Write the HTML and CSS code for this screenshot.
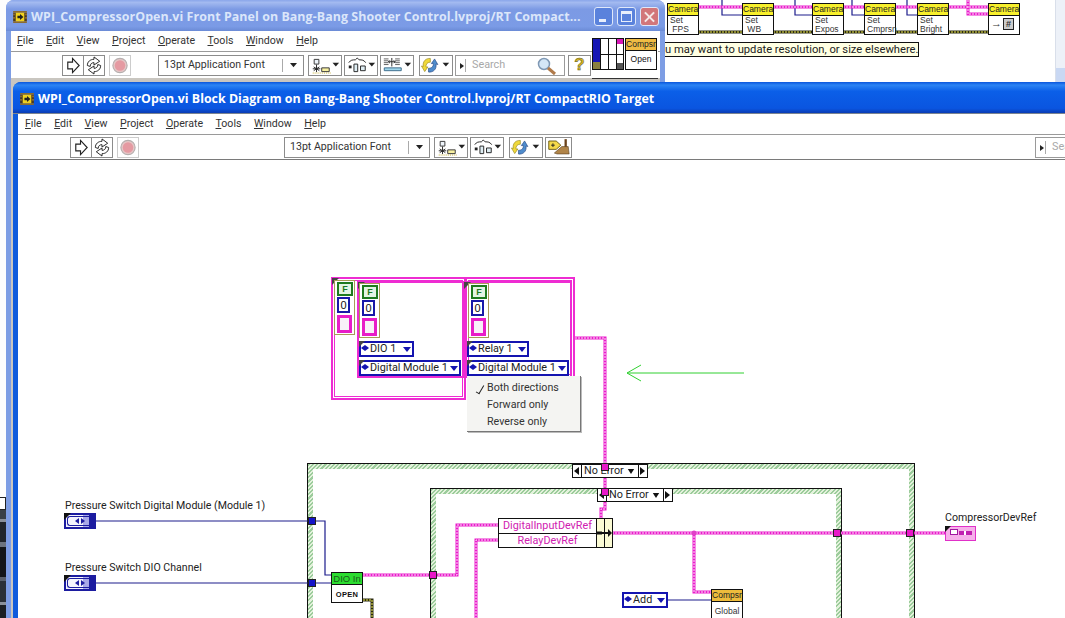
FILE: index.html
```html
<!DOCTYPE html>
<html lang="en">
<head>
<meta charset="utf-8">
<title>WPI_CompressorOpen.vi Block Diagram</title>
<link rel="stylesheet" href="styles.css">
</head>
<body>
<svg class="defs" width="0" height="0" aria-hidden="true">
  <defs>
    <symbol id="i-vi" viewBox="0 0 16 14"><path d="M0 2h16v10H0z" fill="#4a3a20"/><path d="M0 0h16v2H0zM0 12h16v2H0z" fill="#8a6a30"/><path d="M3 2h10v10H3z" fill="#f0d020"/><path d="M5 5.500h3V3.500l4 3.500-4 3.500V8.500H5z" fill="#222"/><path d="M1 3v2M1 7v2M15 3v2M15 7v2" stroke="#e0a040"/></symbol>
    <symbol id="i-run" viewBox="0 0 21 20"><path d="M5 6.500h5V2.500l7 7.500-7 7.500V13.500H5z" fill="#fff" stroke="#222" stroke-width="1.200"/></symbol>
    <symbol id="i-loop" viewBox="0 0 21 20"><path d="M3.500 10c0-4 3-6.500 7-6.500V1l6 4.500-6 4V7C8 7 6.500 8.500 6.500 11z" fill="#fff" stroke="#222"/><path d="M17.500 10c0 4-3 6.500-7 6.500V19l-6-4.500 6-4V13c2.500 0 4-1.500 4-4z" fill="#fff" stroke="#222"/></symbol>
    <symbol id="i-stop" viewBox="0 0 21 20"><circle cx="10.500" cy="10" r="7.500" fill="#e6c6c6" stroke="#b5aeae" stroke-width="1.200"/><circle cx="10.500" cy="10" r="5.500" fill="#e59aa2"/></symbol>
    <symbol id="i-align" viewBox="0 0 34 20"><path d="M5.500 3.500h5v5h-5z" fill="#eef4fa" stroke="#333"/><path d="M8 9v8M4 13.500h8M5 11.500l6 4M11 11.500l-6 4" stroke="#222" stroke-width="1"/><path d="M13.500 12.500h8v4h-8z" fill="#f8f0a0" stroke="#333"/><path d="M4 18h19" stroke="#c0a820" stroke-dasharray="1 1"/><path d="M25 7h7l-3.500 4z" fill="#222"/></symbol>
    <symbol id="i-dist" viewBox="0 0 34 20"><path d="M4 7c2-3 4-3 7-3l2-2 2 2c3 0 5 0 7 3" fill="none" stroke="#222"/><path d="M4 10h3v3H4z" fill="#222"/><path d="M9.500 8.500h4v8h-4zM16.500 10.500h5v5h-5z" fill="#dfeef4" stroke="#222"/><path d="M25 7h7l-3.500 4z" fill="#222"/></symbol>
    <symbol id="i-resize" viewBox="0 0 34 20"><path d="M3 3h5M3 5h5M3 7h5M3 9h5M15 3h5M15 5h5M15 7h5M15 9h5" stroke="#333" stroke-width=".8"/><path d="M11.500 2v9" stroke="#222"/><path d="M8 6h7M9.500 4.500L8 6l1.500 1.500M13.500 4.500L15 6l-1.500 1.500" fill="none" stroke="#222"/><path d="M3.500 12.500h18v3h-18z" fill="#9fd6ea" stroke="#3a6a8a"/><path d="M25 7h7l-3.500 4z" fill="#222"/></symbol>
    <symbol id="i-order" viewBox="0 0 34 20"><path d="M11 2.500C6 2 2.500 6 3.500 11l-2-.5 3.500 6 3.500-5-2 .2C6 9 7.500 6.500 11 6.500z" fill="#efd83a" stroke="#8a7a10" stroke-width=".6"/><path d="M9 17c5 .5 9-3 8-8.500l2 .5-3.500-6-3.500 5 2-.2c.5 2.700-1 5-5 5.200z" fill="#4f8ccc" stroke="#1a3a78" stroke-width=".6"/><path d="M24 7h7l-3.500 4z" fill="#222"/></symbol>
    <symbol id="i-clean" viewBox="0 0 27 20"><path d="M3 3h8l5 4.500-5 4.500H3z" fill="#f5d94a" stroke="#6a5a10"/><path d="M5.500 7.500h4M7.500 5.500v4" stroke="#222"/><path d="M20 1h2.500v9H20z" fill="#6a421a"/><path d="M9 16l8-7h7l1 8H12z" fill="#b08448" stroke="#50361a" stroke-width=".6"/></symbol>
    <symbol id="i-caret" viewBox="0 0 10 8"><path d="M1 1h8L5 6z" fill="#222"/></symbol>
  </defs>
</svg>

<main class="desktop">
  <div class="strip-white"></div>
  <div class="strip-photo"></div>

  <section class="win win-back">
    <div class="back-stage">
      <svg class="wires" width="1065" height="82" aria-hidden="true">
        <path class="w-blue" d="M722 0V15H742M795 0V15H812M852 0V15H864M907 0V15H917"/>
        <path class="w-err" d="M698 32H742M773 32H812M843 32H864M895 32H917M948 32H988"/>
        <path class="w-err-core" d="M698 32H742M773 32H812M843 32H864M895 32H917M948 32H988"/>
        <path class="w-pink" d="M698 7H742M773 7H812M843 7H864M895 7H917M948 7H988M968 0V14H988"/>
        <path class="w-core" d="M698 7H742M773 7H812M843 7H864M895 7H917M948 7H988M968 0V14H988"/>
      </svg>
      <div class="cam c1"><b>Camera</b><span>Set<br>&nbsp;FPS</span></div>
      <div class="cam c2"><b>Camera</b><span>Set<br>&nbsp;WB</span></div>
      <div class="cam c3"><b>Camera</b><span>Set<br>Expos</span></div>
      <div class="cam c4"><b>Camera</b><span>Set<br>Cmprsn</span></div>
      <div class="cam c5"><b>Camera</b><span>Set<br>Bright</span></div>
      <div class="cam c6"><b>Camera</b><span class="cam-file">→<i>#</i></span></div>
      <div class="tip">u may want to update resolution, or size elsewhere.</div>
    </div>
    <div class="back-scroll"><div class="back-thumb"></div></div>
  </section>

  <section class="win win-front">
    <header class="title title-off">
      <svg class="vi-icon"><use href="#i-vi"/></svg>
      <h2>WPI_CompressorOpen.vi Front Panel on Bang-Bang Shooter Control.lvproj/RT Compact...</h2>
      <div class="caps">
        <span class="cap cap-min"></span>
        <span class="cap cap-max"></span>
        <span class="cap cap-close"></span>
      </div>
    </header>
    <nav class="menu">
      <span><u>F</u>ile</span><span><u>E</u>dit</span><span><u>V</u>iew</span><span><u>P</u>roject</span><span><u>O</u>perate</span><span><u>T</u>ools</span><span><u>W</u>indow</span><span><u>H</u>elp</span>
    </nav>
    <div class="tools tools-front">
      <span class="tb tb-s"><svg><use href="#i-run"/></svg></span>
      <span class="tb tb-s"><svg><use href="#i-loop"/></svg></span>
      <span class="tb tb-s tb-stop"><svg><use href="#i-stop"/></svg></span>
      <span class="font-sel">13pt Application Font<em></em><svg><use href="#i-caret"/></svg></span>
      <span class="tb tb-m"><svg><use href="#i-align"/></svg></span>
      <span class="tb tb-m"><svg><use href="#i-dist"/></svg></span>
      <span class="tb tb-m"><svg><use href="#i-resize"/></svg></span>
      <span class="tb tb-m tb-far"><svg><use href="#i-order"/></svg></span>
      <span class="search"><i></i>Search
        <svg class="lens" viewBox="0 0 22 20"><circle cx="8" cy="8" r="5.500" fill="#d4e6f6" stroke="#7f98b4" stroke-width="1.500"/><path d="M12 12l7 6" stroke="#b07a4a" stroke-width="3"/></svg>
      </span>
      <span class="tb tb-help">?</span>
    </div>
    <div class="front-rest"></div>
    <div class="pane">
      <div class="conn">
        <span class="p1"></span><span class="p2"></span><span class="p3"></span>
      </div>
      <div class="vi-node"><b>Compsr</b><span>Open</span></div>
    </div>
  </section>

  <section class="win win-block">
    <header class="title title-on">
      <svg class="vi-icon"><use href="#i-vi"/></svg>
      <h2>WPI_CompressorOpen.vi Block Diagram on Bang-Bang Shooter Control.lvproj/RT CompactRIO Target</h2>
    </header>
    <nav class="menu">
      <span><u>F</u>ile</span><span><u>E</u>dit</span><span><u>V</u>iew</span><span><u>P</u>roject</span><span><u>O</u>perate</span><span><u>T</u>ools</span><span><u>W</u>indow</span><span><u>H</u>elp</span>
    </nav>
    <div class="tools tools-block">
      <span class="tb tb-s"><svg><use href="#i-run"/></svg></span>
      <span class="tb tb-s"><svg><use href="#i-loop"/></svg></span>
      <span class="tb tb-s tb-stop"><svg><use href="#i-stop"/></svg></span>
      <span class="font-sel font-sel-b">13pt Application Font<em></em><svg><use href="#i-caret"/></svg></span>
      <span class="tb tb-m"><svg><use href="#i-align"/></svg></span>
      <span class="tb tb-m"><svg><use href="#i-dist"/></svg></span>
      <span class="tb tb-m tb-far"><svg><use href="#i-order"/></svg></span>
      <span class="tb tb-c"><svg><use href="#i-clean"/></svg></span>
      <span class="search search-b"><i></i>Search</span>
    </div>

    <div class="canvas">
      <div class="stage">
        <div class="case case-outer"></div>
        <div class="case case-inner"></div>

        <div class="seq seq-a"></div>
        <div class="seq seq-b"></div>
        <div class="seq-in seq-c"></div>
        <div class="seq-in seq-d"></div>

        <svg class="wires" width="1065" height="618" aria-hidden="true">
          <path class="w-blue" d="M95 521H312H325V575H331M95 583H331M668 600H711"/>
          <path class="w-err" d="M363 600H372V618"/>
          <path class="w-err-core" d="M363 600H372V618"/>
          <path class="w-pink" d="M575 338H605V509H601V518M363 575H457V525H498M498 540H476V618M612 533H945M694 533V592H711"/>
          <path class="w-core" d="M575 338H605V509H601V518M363 575H457V525H498M498 540H476V618M612 533H945M694 533V592H711"/>
          <circle class="w-dot" cx="694" cy="533" r="2.500"/>
          <path class="w-arrow" d="M744 373H627M641 365L627 373L641 381"/>
        </svg>

        <div class="order o1"><b>F</b><i>0</i><span></span></div>
        <div class="order o2"><b>F</b><i>0</i><span></span></div>
        <div class="order o3"><b>F</b><i>0</i><span></span></div>

        <div class="ring r1"><s></s>DIO 1<svg viewBox="0 0 10 8"><path d="M0 1h10L5 7z"/></svg></div>
        <div class="ring r2"><s></s>Digital Module 1<svg viewBox="0 0 10 8"><path d="M0 1h10L5 7z"/></svg></div>
        <div class="ring r3"><s></s>Relay 1<svg viewBox="0 0 10 8"><path d="M0 1h10L5 7z"/></svg></div>
        <div class="ring r4"><s></s>Digital Module 1<svg viewBox="0 0 10 8"><path d="M0 1h10L5 7z"/></svg></div>
        <div class="ring r5"><s></s>Add<svg viewBox="0 0 10 8"><path d="M0 1h10L5 7z"/></svg></div>

        <ul class="popup">
          <li class="on">Both directions</li>
          <li>Forward only</li>
          <li>Reverse only</li>
        </ul>

        <div class="sel sel-outer"><u></u><span>No Error</span><svg viewBox="0 0 10 8"><path d="M1 1h8L5 7z"/></svg><u class="nx"></u></div>
        <div class="sel sel-inner"><u></u><span>No Error</span><svg viewBox="0 0 10 8"><path d="M1 1h8L5 7z"/></svg><u class="nx"></u></div>

        <span class="term t-b1"></span><span class="term t-b2"></span>
        <span class="term t-p1"></span><span class="term t-p2"></span>
        <span class="term t-p3"></span><span class="term t-p4"></span><span class="term t-p5"></span>

        <div class="label l1">Pressure Switch Digital Module (Module 1)</div>
        <div class="label l2">Pressure Switch DIO Channel</div>
        <div class="label l3">CompressorDevRef</div>

        <div class="ctrl ct1"><s></s><i></i></div>
        <div class="ctrl ct2"><s></s><i></i></div>

        <div class="dio"><b>DIO In</b><span>OPEN</span></div>

        <div class="bundle">
          <div class="bn-names"><span>DigitalInputDevRef</span><span>RelayDevRef</span></div>
          <div class="bn-a"></div><div class="bn-b"></div>
          <svg viewBox="0 0 15 8"><path d="M0 2.500h5v3H0z"/><path d="M5 3h6V0l4 4-4 4V5H5z"/></svg>
        </div>

        <div class="indicator"><s></s><i></i><em></em></div>

        <div class="global"><b>Compsr</b><span>Global</span></div>
      </div>
    </div>
  </section>
</main>
</body>
</html>
```
FILE: styles.css
```css
html, body { margin: 0; padding: 0; width: 1065px; height: 618px; overflow: hidden; background: #fff; }
body { font-family: Roboto, "Liberation Sans", sans-serif; font-size: 11px; color: #111; }
.defs { position: absolute; }
.desktop { position: relative; width: 1065px; height: 618px; overflow: hidden; background: #fdfdfd; }
.strip-white { position: absolute; left: 0; top: 497px; width: 6px; height: 13px; border: 1px solid #222; border-left: 0; box-sizing: border-box; background: #fff; }
.strip-photo { position: absolute; left: 0; top: 510px; width: 6px; height: 108px; background: linear-gradient(180deg, #3a4048 0 8%, #8a909b 8% 11%, #22262c 11% 30%, #6d7480 30% 34%, #14161a 34% 62%, #5a606c 62% 66%, #2b3038 66% 85%, #8a909b 85% 88%, #1c1f24 88%); }

/* windows */
.win { position: absolute; box-sizing: border-box; }
.win-back { left: 640px; top: 0; width: 425px; height: 82px; background: #fff; overflow: hidden; }
.back-stage { position: absolute; left: -640px; top: 0; width: 1065px; height: 82px; }
.back-scroll { position: absolute; right: 0; top: 0; width: 9px; height: 82px; background: #edf1f8; border-left: 1px solid #d9dfea; }
.back-thumb { position: absolute; left: 0; right: 0; top: 68px; height: 14px; background: #c9d8f3; }

.win-front { left: 6px; top: 0; width: 659px; height: 618px; display: flex; flex-direction: column; padding: 0 5px; background: #7d9de4; border-radius: 8px 8px 0 0; }
.win-block { left: 13px; top: 82px; width: 1100px; height: 536px; display: flex; flex-direction: column; padding: 0 5px; background: #0f5bdc; border-radius: 8px 0 0 0; }

.title { display: flex; align-items: center; flex: none; margin: 0 -5px; padding-left: 7px; gap: 4px; box-sizing: border-box; }
.title h2 { margin: 0; font: 700 12.400px/1 "Open Sans", "Liberation Sans", sans-serif; white-space: nowrap; }
.title-off { height: 31px; padding-top: 3px; border-radius: 8px 8px 0 0; background: linear-gradient(180deg, #8aa6ea 0, #a3baf0 8%, #7c9ae4 30%, #7b9be6 85%, #6b8bd6 100%); }
.title-off h2 { color: #dbe6fa; letter-spacing: .08px; }
.title-on { height: 32px; padding-top: 3px; border-radius: 8px 0 0 0; background: linear-gradient(180deg, #0a56dc 0, #2c84f4 10%, #0b5fe8 30%, #0a55e0 85%, #0a3cb4 100%); border-bottom: 1px solid #7b8490; }
.title-on h2 { color: #fff; }
.vi-icon { width: 14px; height: 12px; flex: none; }

.caps { display: flex; gap: 4px; position: absolute; left: 588px; top: 7px; }
.cap { width: 19px; height: 19px; box-sizing: border-box; border: 1px solid #dfe8fa; border-radius: 3px; background: #5a82dc; position: relative; }
.cap-min::after { content: ""; position: absolute; left: 4px; bottom: 3px; width: 7px; height: 3px; background: #e8eefb; }
.cap-max::after { content: ""; position: absolute; left: 3px; top: 3px; width: 11px; height: 11px; box-sizing: border-box; border: 1px solid #e8eefb; border-top-width: 3px; }
.cap-close { background: #d2767a; }
.cap-close::before, .cap-close::after { content: ""; position: absolute; left: 2px; top: 7.500px; width: 13px; height: 2px; background: #f4e8e8; transform: rotate(45deg); }
.cap-close::after { transform: rotate(-45deg); }

.menu { display: flex; flex: none; height: 20px; align-items: center; padding-left: 6px; gap: 12.500px; background: #fff; border-bottom: 1px solid #9a9a9a; box-sizing: content-box; font: 10.600px/1 Roboto, "Liberation Sans", sans-serif; color: #333; }
.menu u { text-decoration-thickness: 1px; text-underline-offset: 1px; }
.win-block .menu { padding-left: 7px; }

.tools { display: flex; flex: none; align-items: center; height: 26px; box-sizing: border-box; background: #fff; }
.tools-front { padding-left: 51px; }
.tools-block { padding-left: 52px; height: 25px; border-bottom: 1px solid #7a7a7a; }
.tb { display: block; box-sizing: border-box; height: 21px; border: 1px solid #8c8c8c; flex: none; background: #fff; }
.tb svg { display: block; width: 100%; height: 100%; }
.tb-s { width: 22px; margin-right: -1px; }
.tb-stop { margin-left: 5px; margin-right: 27px; border-color: #ccc; }
.tools-block .tb-stop { margin-right: 145px; }
.tb-m { width: 34px; margin-right: 2px; }
.tb-far { margin-left: 3px; margin-right: 2px; }
.tb-c { width: 27px; }
.tb-help { width: 23px; margin-left: 3px; font: 700 17px/18px "Liberation Sans", sans-serif; text-align: center; color: #d8b420; -webkit-text-stroke: .5px #5a5a20; }
.font-sel { display: flex; align-items: center; box-sizing: border-box; width: 146px; height: 21px; flex: none; margin-right: 4px; padding-left: 5px; border: 1px solid #8c8c8c; font: 10.600px/1 Roboto, "Liberation Sans", sans-serif; color: #333; }
.font-sel em { width: 1px; height: 13px; background: #aaa; margin-left: auto; margin-right: 6px; }
.font-sel svg { width: 9px; height: 7px; margin-right: 5px; }
.search { display: flex; align-items: center; position: relative; box-sizing: border-box; width: 110px; height: 21px; flex: none; padding-left: 16px; border: 1px solid #9a9a9a; font: 10.800px/1 Roboto, "Liberation Sans", sans-serif; color: #a8a8a8; }
.search i { position: absolute; left: 4px; top: 7px; border-left: 4px solid #222; border-top: 3px solid transparent; border-bottom: 3px solid transparent; }
.search i::after { content: ""; position: absolute; left: 1px; top: -7px; width: 1px; height: 13px; background: #aaa; }
.lens { position: absolute; right: 6px; top: 0; width: 22px; height: 20px; }
.search-b { margin-left: 463px; }

.front-rest { flex: 1; background: #c9c6c0; }
.pane { position: absolute; left: 586px; top: 38px; width: 66px; height: 40px; display: flex; align-items: flex-start; border-bottom: 1px solid #333; background: #fff; }
.conn { width: 32px; height: 32px; box-sizing: border-box; margin-right: 1px; position: relative; border: 1px solid #111; background: #fff; background-image: linear-gradient(#111, #111), linear-gradient(#111, #111), linear-gradient(#111, #111), linear-gradient(#111, #111); background-size: 1px 100%, 1px 100%, 1px 100%, 100% 1px; background-position: 7px 0, 15px 0, 23px 0, 0 15px; background-repeat: no-repeat; }
.conn .p1 { position: absolute; left: 0; top: 0; width: 7px; height: 30px; background: linear-gradient(180deg, #1616b4 0 77%, #8a8040 77%); }
.conn .p2 { position: absolute; left: 24px; top: 0; width: 6px; height: 5px; background: #d818b8; }
.conn .p3 { position: absolute; left: 24px; top: 24px; width: 6px; height: 6px; background: #555; }
.vi-node { width: 32px; height: 32px; box-sizing: border-box; border: 1px solid #111; text-align: center; font: 8.500px/1 "Liberation Sans", sans-serif; background: #fff; }
.vi-node b { display: block; font-weight: 400; height: 11px; line-height: 11px; background: #f0bc44; border-bottom: 1px solid #111; color: #222; }
.vi-node span { display: block; padding-top: 4px; }

/* canvas */
.canvas { position: relative; flex: 1; background: #fff; overflow: hidden; }
.stage { position: absolute; left: -18px; top: -160px; width: 1065px; height: 618px; }
.wires { position: absolute; left: 0; top: 0; fill: none; }
.w-blue { stroke: #1c1c8c; stroke-width: 1.200; }
.w-pink { stroke: #ea1ccc; stroke-width: 3; }
.w-core { stroke: #fbe0f6; stroke-width: 1; stroke-dasharray: 2 1; }
.w-err { stroke: #2a2a10; stroke-width: 3; }
.w-err-core { stroke: #f0ec50; stroke-width: 1; stroke-dasharray: 2 1; }
.w-dot { fill: #e040c8; }
.w-arrow { stroke: #30d030; stroke-width: 1; }

/* background window nodes */
.cam { position: absolute; top: 3px; width: 32px; height: 32px; box-sizing: border-box; border: 1px solid #111; background: #fff; font: 8.500px/1 "Liberation Sans", sans-serif; }
.cam b { display: block; height: 11px; line-height: 11px; font-weight: 400; text-align: center; background: #f8f02c; border-bottom: 1px solid #111; color: #222; }
.cam span { display: block; padding: 0 0 0 2px; line-height: 9px; color: #333; white-space: nowrap; }
.cam-file { font-size: 11px; padding-top: 2px !important; }
.cam-file i { display: inline-block; width: 11px; height: 12px; margin-left: 1px; background: #ccc; border: 1px solid #222; box-sizing: border-box; font: 700 9px/11px "Liberation Sans", sans-serif; text-align: center; }
.c1 { left: 667px; } .c2 { left: 742px; } .c3 { left: 812px; } .c4 { left: 864px; } .c5 { left: 917px; } .c6 { left: 988px; }
.tip { position: absolute; left: 665px; top: 42px; width: 254px; height: 15px; box-sizing: border-box; border: 1px solid #111; border-left: 0; background: #ffffe2; font: 11.200px/14px Roboto, "Liberation Sans", sans-serif; color: #222; white-space: nowrap; overflow: hidden; }

/* structures */
.case { position: absolute; box-sizing: border-box; border: 1px solid #111; border-bottom: 0; background: repeating-linear-gradient(135deg, #9ccc9c 0 1.500px, #e4f2dc 1.500px 3px); }
.case::after { content: ""; position: absolute; left: 5px; right: 5px; top: 5px; bottom: 0; background: #fff; }
.case-outer { left: 307px; top: 463px; width: 608px; height: 155px; }
.case-inner { left: 430px; top: 488px; width: 412px; height: 130px; }

.seq { position: absolute; box-sizing: border-box; border: 2px solid #ee2cd2; box-shadow: inset 0 0 0 1px #fff, inset 0 0 0 2px #ee2cd2; }
.seq-a { left: 331px; top: 277px; width: 135px; height: 123px; }
.seq-b { left: 465px; top: 277px; width: 110px; height: 101px; }
.seq-in { position: absolute; box-sizing: border-box; border: 2px solid #ee2cd2; }
.seq-c { left: 357px; top: 281px; width: 107px; height: 97px; }
.seq-d { left: 465px; top: 281px; width: 107px; height: 97px; border-left: 0; }
.seq-a::before, .seq-c::before, .seq-d::before { content: ""; position: absolute; left: -1px; top: -1px; width: 0; height: 0; border-top: 7px solid #444; border-right: 7px solid transparent; }

.order { position: absolute; box-sizing: border-box; width: 21px; height: 55px; border: 1px solid #a89a58; background: #fff; padding: 1px 2px; }
.order b, .order i, .order span { display: block; box-sizing: border-box; }
.order b { width: 16px; height: 14px; border: 2px solid #1e7a1e; background: #e4f4e4; font: 700 9px/10px "Liberation Sans", sans-serif; text-align: center; color: #1e7a1e; }
.order i { width: 13px; height: 16px; margin-top: 1px; border: 2px solid #1818a8; font: 400 11px/12px "Liberation Sans", sans-serif; text-align: center; }
.order span { width: 15px; height: 18px; margin-top: 2px; border: 3px solid #e81cc8; background: #f8f0f8; }
.o1 { left: 334px; top: 280px; } .o2 { left: 359px; top: 283px; } .o3 { left: 468px; top: 283px; }

.ring { position: absolute; display: flex; align-items: center; box-sizing: border-box; height: 16px; padding-left: 9px; border: 2px solid #1414b0; background: #fff; font: 10.800px/1 Roboto, "Liberation Sans", sans-serif; color: #222; white-space: nowrap; }
.ring::before { content: ""; position: absolute; left: -2px; top: -2px; border-top: 6px solid #444; border-right: 6px solid transparent; }
.ring s { position: absolute; left: 0; top: 2px; border-right: 4px solid #1414b0; border-top: 3px solid transparent; border-bottom: 3px solid transparent; }
.ring s::after { content: ""; position: absolute; left: 4px; top: -3px; border-left: 4px solid #1414b0; border-top: 3px solid transparent; border-bottom: 3px solid transparent; }
.ring svg { position: absolute; right: 1px; top: 3px; width: 8px; height: 7px; fill: #1414b0; }
.r1 { left: 359px; top: 341px; width: 55px; }
.r2 { left: 359px; top: 360px; width: 102px; }
.r3 { left: 467px; top: 341px; width: 62px; }
.r4 { left: 467px; top: 360px; width: 102px; }
.r5 { left: 622px; top: 592px; width: 46px; }
.r5::before { display: none; }

.popup { position: absolute; left: 467px; top: 376px; width: 114px; height: 56px; box-sizing: border-box; margin: 0; padding: 3px 0 0 20px; list-style: none; background: #f4f4f2; border-right: 1px solid #777; border-bottom: 1px solid #777; box-shadow: 1px 1px 0 #bbb; font: 10.700px/17px Roboto, "Liberation Sans", sans-serif; color: #333; }
.popup .on { position: relative; }
.popup .on::before { content: ""; position: absolute; left: -9px; top: 5px; width: 3px; height: 9px; border-right: 1.500px solid #222; border-bottom: 1.500px solid #222; transform: rotate(30deg); }

.sel { position: absolute; display: flex; align-items: center; box-sizing: border-box; width: 76px; height: 14px; border: 1px solid #111; background: #fff; font: 10.800px/1 Roboto, "Liberation Sans", sans-serif; color: #222; white-space: nowrap; }
.sel u { position: relative; display: block; flex: none; width: 8px; height: 12px; border-right: 1px solid #111; text-decoration: none; }
.sel u::after { content: ""; position: absolute; left: 1px; top: 2px; border-right: 5px solid #111; border-top: 4px solid transparent; border-bottom: 4px solid transparent; }
.sel u.nx { margin-left: 3px; border-right: 0; border-left: 1px solid #111; }
.sel u.nx::after { border-right: 0; border-left: 5px solid #111; }
.sel span { padding-left: 2px; }
.sel svg { width: 8px; height: 7px; margin-left: auto; fill: #111; flex: none; }
.sel-outer { left: 572px; top: 464px; }
.sel-inner { left: 597px; top: 488px; }

.term { position: absolute; width: 8px; height: 8px; box-sizing: border-box; border: 1px solid #222; background: #e818c8; }
.t-b1, .t-b2 { background: #1414c8; }
.t-b1 { left: 308px; top: 517px; } .t-b2 { left: 308px; top: 579px; }
.t-p1 { left: 601px; top: 463px; } .t-p2 { left: 601px; top: 488px; }
.t-p3 { left: 429px; top: 571px; } .t-p4 { left: 833px; top: 529px; } .t-p5 { left: 906px; top: 529px; }

.label { position: absolute; font: 10.600px/1 Roboto, "Liberation Sans", sans-serif; color: #222; white-space: nowrap; }
.l1 { left: 65px; top: 501px; } .l2 { left: 65px; top: 563px; } .l3 { left: 945px; top: 513px; }

.ctrl { position: absolute; left: 64px; width: 32px; height: 16px; box-sizing: border-box; border: 2px solid #1c1ca0; background: linear-gradient(90deg, #f4f4fc 0 62%, #a8a8e8 62% 82%, #1c1ca0 82%); }
.ctrl i { position: absolute; left: 1px; top: 1px; right: 4px; bottom: 1px; border: 1px solid #1c1ca0; border-right: 0; border-radius: 3px 0 0 3px; }
.ctrl i::before { content: ""; position: absolute; left: 7px; top: 1px; border-right: 4px solid #1c1ca0; border-top: 3.500px solid transparent; border-bottom: 3.500px solid transparent; }
.ctrl i::after { content: ""; position: absolute; left: 13px; top: 1px; border-left: 4px solid #1c1ca0; border-top: 3.500px solid transparent; border-bottom: 3.500px solid transparent; }
.ctrl s { position: absolute; left: -2px; top: -2px; z-index: 1; border-top: 7px solid #111; border-right: 7px solid transparent; }
.ct1 { top: 513px; } .ct2 { top: 575px; }

.dio { position: absolute; left: 331px; top: 572px; width: 32px; height: 31px; box-sizing: border-box; border: 1px solid #111; background: #fff; font: 9px/1 "Liberation Sans", sans-serif; text-align: center; }
.dio b { display: block; height: 11px; line-height: 11px; font-weight: 400; background: #2cdc30; border-bottom: 1px solid #111; color: #1a5a1a; font-size: 9.500px; white-space: nowrap; }
.dio span { display: block; padding-top: 6px; font-size: 7.500px; font-weight: 700; letter-spacing: .3px; }

.bundle { position: absolute; left: 498px; top: 518px; width: 115px; height: 30px; box-sizing: border-box; display: flex; border: 1px solid #111; background: #fff; }
.bn-names { flex: 1; display: flex; flex-direction: column; font: 10.800px/14px Roboto, "Liberation Sans", sans-serif; color: #d020b0; text-align: center; }
.bn-names span:first-child { border-bottom: 1px solid #111; height: 14px; }
.bn-a, .bn-b { width: 7px; background: #fbfbd4; border-left: 1px solid #111; }
.bundle svg { position: absolute; right: 0; top: 10px; width: 15px; height: 8px; fill: #111; }

.indicator { position: absolute; left: 945px; top: 526px; width: 31px; height: 15px; box-sizing: border-box; border: 1px solid #e030c8; background: #f6b0ea; }
.indicator s { position: absolute; left: -1px; top: -1px; border-top: 6px solid #111; border-right: 6px solid transparent; }
.indicator i { position: absolute; left: 4px; top: 2px; width: 6px; height: 4px; border: 1px solid #a018a0; background: #fff; }
.indicator em { position: absolute; left: 13px; top: 4px; width: 13px; height: 4px; background: linear-gradient(90deg, #c020b0 0 40%, #fff 40% 55%, #c020b0 55%); }

.global { position: absolute; left: 711px; top: 589px; width: 32px; height: 32px; box-sizing: border-box; border: 1px solid #111; background: #fff; font: 8.500px/1 "Liberation Sans", sans-serif; text-align: center; }
.global b { display: block; height: 11px; line-height: 11px; font-weight: 400; background: #eebc3c; border-bottom: 1px solid #111; color: #222; }
.global span { display: block; padding-top: 5px; color: #333; }
```
